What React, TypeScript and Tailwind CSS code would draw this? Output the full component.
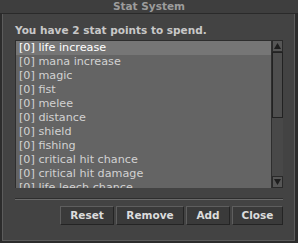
import React from "react";

const items = [
  "life increase",
  "mana increase",
  "magic",
  "fist",
  "melee",
  "distance",
  "shield",
  "fishing",
  "critical hit chance",
  "critical hit damage",
  "life leech chance",
];

function Btn({ label, w }: { label: string; w: string }) {
  return (
    <div
      className={`${w} h-[19px] flex items-center justify-center bg-[#3a3a3a] border border-t-[#5e5e5e] border-l-[#5e5e5e] border-r-[#242424] border-b-[#242424] text-[10.5px] font-bold text-[#dcdcdc]`}
    >
      {label}
    </div>
  );
}

export default function App() {
  return (
    <div className="w-[298px] h-[243px] bg-[#2c2c2c] font-['DejaVu_Sans',sans-serif] overflow-hidden">
      <div className="h-[14px] bg-[#3e3e3e] border-b border-[#2a2a2a] flex items-center justify-center text-[10.5px] font-bold text-[#9c9c9c] leading-none">
        Stat System
      </div>
      <div className="ml-[2px] w-[293px] h-[227px] bg-[#434343] border-l border-r border-b border-[#5c5c5c] pl-[12px] pr-[10px]">
        <div className="pt-[9px] h-[26px] text-[10.5px] font-bold text-[#c8c8c8] leading-[14px] whitespace-nowrap">
          You have 2 stat points to spend.
        </div>
        <div className="flex h-[148px]">
          <div className="w-[256px] h-full bg-[#646464] border-t border-l border-[#2e2e2e] overflow-hidden">
            {items.map((t, i) => (
              <div
                key={t}
                className={`h-[14px] pl-[3px] text-[11.2px] leading-[14px] whitespace-nowrap ${
                  i === 0 ? "bg-[#767676] text-white" : "text-[#d2d2d2]"
                }`}
              >
                [0] {t}
              </div>
            ))}
          </div>
          <div className="w-[12px] h-full flex flex-col bg-[#484848] border-l border-[#2e2e2e]">
            <div className="h-[12px] bg-[#565656] border border-[#2a2a2a] flex items-center justify-center">
              <svg width="7" height="6" viewBox="0 0 7 6">
                <path d="M3.5 0 L7 6 L0 6 Z" fill="#1e1e1e" />
              </svg>
            </div>
            <div className="h-[66px] bg-[#4e4e4e] border border-[#222222]" />
            <div className="flex-1" />
            <div className="h-[12px] bg-[#565656] border border-[#2a2a2a] flex items-center justify-center">
              <svg width="7" height="6" viewBox="0 0 7 6">
                <path d="M0 0 L7 0 L3.5 6 Z" fill="#1e1e1e" />
              </svg>
            </div>
          </div>
        </div>
        <div className="mt-[10px] h-[2px] w-[268px] border-t border-[#2e2e2e] border-b border-b-[#6a6a6a]" />
        <div className="mt-[6px] w-[268px] flex justify-end gap-[2px]">
          <Btn label="Reset" w="w-[54px]" />
          <Btn label="Remove" w="w-[68px]" />
          <Btn label="Add" w="w-[44px]" />
          <Btn label="Close" w="w-[51px]" />
        </div>
      </div>
    </div>
  );
}
